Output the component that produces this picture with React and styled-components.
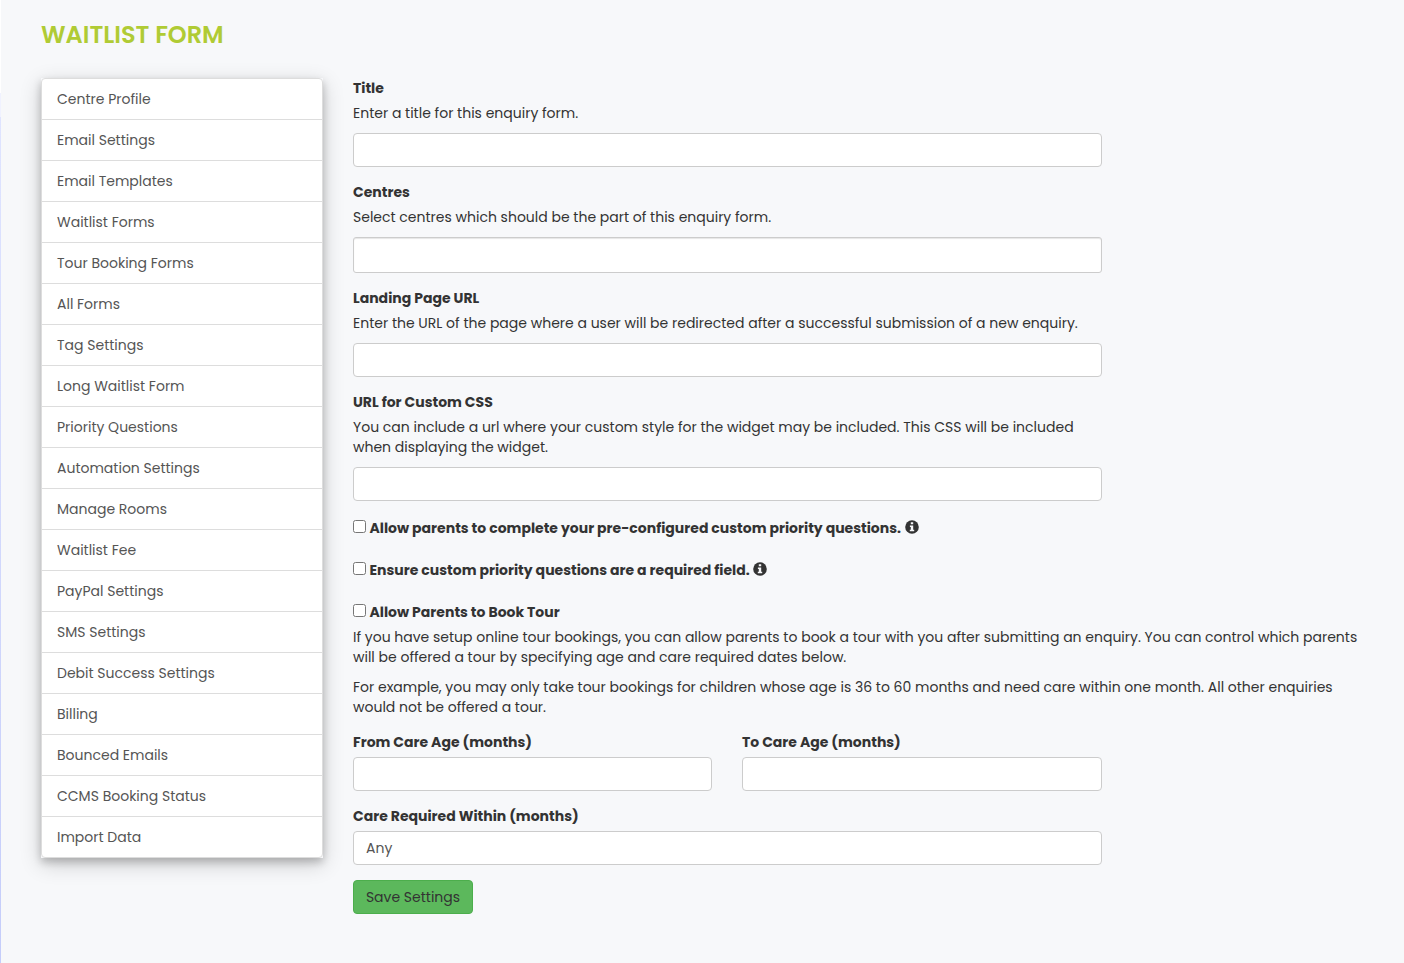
import React from "react";
import styled, { createGlobalStyle } from "styled-components";

const GlobalStyle = createGlobalStyle`
  *, *::before, *::after { box-sizing: border-box; }
  body {
    margin: 0;
    background: #f7f8fa;
    color: #333;
    font-family: Poppins, Inter, sans-serif;
    font-size: 14px;
    line-height: 20px;
  }
`;

const Page = styled.div`
  display: flex;
  min-height: 963px;
`;

const EdgeStrip = styled.div`
  width: 1px;
  flex: none;
  background: linear-gradient(#fff 0 93px, #f0f2ff 93px 117px, #dfe4ff 117px, #c5cdfa 100%);
`;

const Main = styled.main`
  flex: 1;
  padding: 18px 38px 0 40px;
`;

const Heading = styled.h1`
  margin: 0 0 26px;
  color: #b0cb34;
  font-size: 24px;
  font-weight: 600;
  line-height: 34px;
`;

const Columns = styled.div`
  display: flex;
  align-items: flex-start;
  gap: 30px;
`;

const Menu = styled.nav`
  width: 282px;
  flex: none;
  background: #f7f8fa;
  box-shadow: 0 4px 8px rgba(0, 0, 0, 0.2), 0 6px 20px rgba(0, 0, 0, 0.19);
`;

const MenuList = styled.div`
  border: 1px solid #ddd;
  border-radius: 4px;
  background: #fff;
`;

const MenuItem = styled.a`
  display: block;
  height: 41px;
  padding: 10px 15px;
  border-bottom: 1px solid #ddd;
  color: #555;

  &:last-child {
    height: 40px;
    border-bottom: 0;
  }
`;

const Form = styled.form`
  flex: 1;
  min-width: 0;
`;

const Field = styled.div`
  width: 749px;
  margin-bottom: 15px;
`;

const FieldPair = styled.div`
  display: grid;
  grid-template-columns: 359px 360px;
  column-gap: 30px;
  margin: 15px 0;
`;

const Label = styled.label`
  display: block;
  margin-bottom: 5px;
  font-weight: 700;
`;

const Help = styled.p`
  margin: 0 0 10px;
`;

const Input = styled.input`
  display: block;
  width: 100%;
  height: 34px;
  padding: 6px 12px;
  border: 1px solid #ccc;
  border-radius: 4px;
  background: #fff;
  color: #555;
  font: inherit;
`;

const MultiSelect = styled.div`
  height: 36px;
  border: 1px solid #ccc;
  border-radius: 3px;
  background: #fff;
  box-shadow: inset 0 1px 1px rgba(0, 0, 0, 0.1);
`;

const CheckRow = styled.label`
  display: flex;
  height: 20px;
  margin: ${(p) => (p.$first ? "17px 0 22px" : p.$last ? "0 0 5px" : "0 0 22px")};
  font-weight: 700;
`;

const CheckBox = styled.input`
  width: 13px;
  height: 13px;
  margin: 2px 3.5px 0 0;
`;

const InfoSvg = styled.svg`
  width: 14px;
  height: 14px;
  margin: 2px 0 0 3.75px;
`;

const SaveButton = styled.button`
  display: block;
  width: 120px;
  height: 34px;
  padding: 0;
  border: 1px solid #4cae4c;
  border-radius: 4px;
  background: #5cb85c;
  color: #333;
  font: inherit;
`;

const menuItems = [
  "Centre Profile",
  "Email Settings",
  "Email Templates",
  "Waitlist Forms",
  "Tour Booking Forms",
  "All Forms",
  "Tag Settings",
  "Long Waitlist Form",
  "Priority Questions",
  "Automation Settings",
  "Manage Rooms",
  "Waitlist Fee",
  "PayPal Settings",
  "SMS Settings",
  "Debit Success Settings",
  "Billing",
  "Bounced Emails",
  "CCMS Booking Status",
  "Import Data",
];

function InfoIcon() {
  return (
    <InfoSvg viewBox="0 0 14 14" aria-hidden="true">
      <circle cx="7" cy="7" r="6.8" fill="#333" />
      <path d="M5.8 2.3h2.4v1.9H5.8zM4.9 5.4h3.3v4.3h1v1.6H4.8V9.7h1V7h-.9z" fill="#f7f8fa" />
    </InfoSvg>
  );
}

export default function App() {
  return (
    <Page>
      <GlobalStyle />
      <EdgeStrip />
      <Main>
        <Heading>WAITLIST FORM</Heading>
        <Columns>
          <Menu>
            <MenuList>
              {menuItems.map((name) => (
                <MenuItem key={name}>{name}</MenuItem>
              ))}
            </MenuList>
          </Menu>
          <Form>
            <Field>
              <Label>Title</Label>
              <Help>Enter a title for this enquiry form.</Help>
              <Input />
            </Field>
            <Field>
              <Label>Centres</Label>
              <Help>Select centres which should be the part of this enquiry form.</Help>
              <MultiSelect />
            </Field>
            <Field>
              <Label>Landing Page URL</Label>
              <Help>
                Enter the URL of the page where a user will be redirected after a successful
                submission of a new enquiry.
              </Help>
              <Input />
            </Field>
            <Field>
              <Label>URL for Custom CSS</Label>
              <Help>
                You can include a url where your custom style for the widget may be included. This
                CSS will be included when displaying the widget.
              </Help>
              <Input />
            </Field>
            <CheckRow $first>
              <CheckBox type="checkbox" />
              Allow parents to complete your pre-configured custom priority questions.
              <InfoIcon />
            </CheckRow>
            <CheckRow>
              <CheckBox type="checkbox" />
              Ensure custom priority questions are a required field.
              <InfoIcon />
            </CheckRow>
            <CheckRow $last>
              <CheckBox type="checkbox" />
              Allow Parents to Book Tour
            </CheckRow>
            <Help>
              If you have setup online tour bookings, you can allow parents to book a tour with you
              after submitting an enquiry. You can control which parents will be offered a tour by
              specifying age and care required dates below.
            </Help>
            <Help>
              For example, you may only take tour bookings for children whose age is 36 to 60
              months and need care within one month. All other enquiries would not be offered a
              tour.
            </Help>
            <FieldPair>
              <div>
                <Label>From Care Age (months)</Label>
                <Input />
              </div>
              <div>
                <Label>To Care Age (months)</Label>
                <Input />
              </div>
            </FieldPair>
            <Field>
              <Label>Care Required Within (months)</Label>
              <Input defaultValue="Any" />
            </Field>
            <SaveButton type="button">Save Settings</SaveButton>
          </Form>
        </Columns>
      </Main>
    </Page>
  );
}
